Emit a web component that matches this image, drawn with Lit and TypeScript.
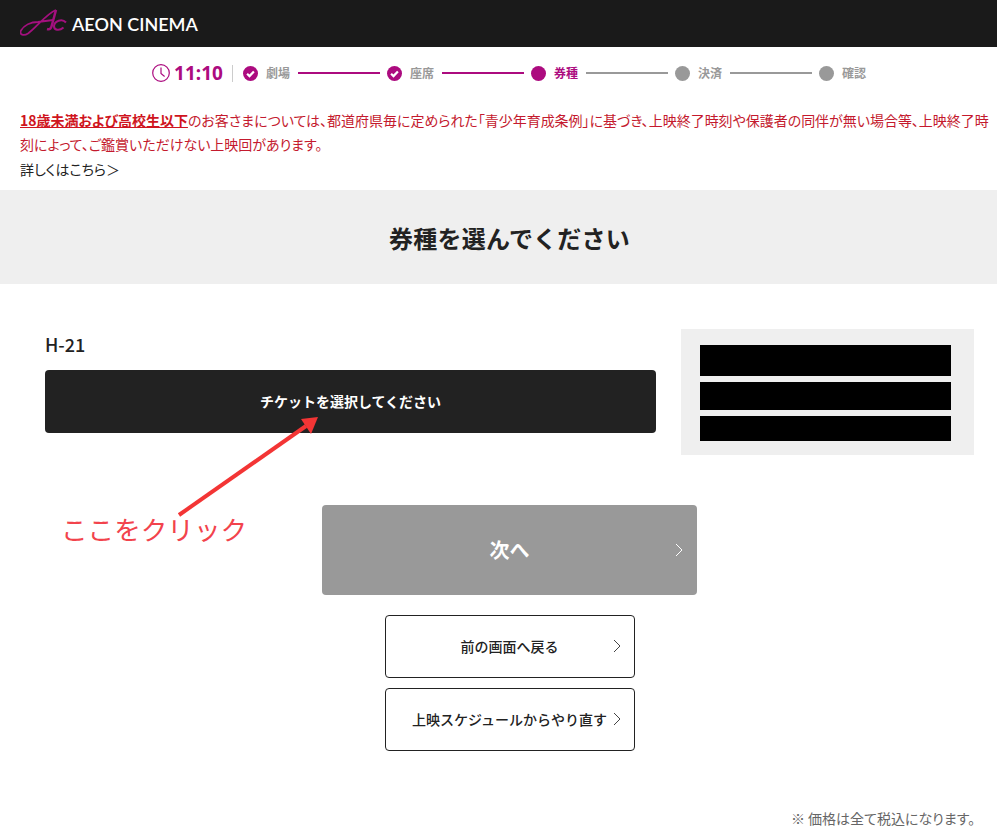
import { LitElement, html, css, svg } from "lit";
import { customElement } from "lit/decorators.js";

const check = svg`<svg class="ic" viewBox="0 0 15 15" width="15" height="15"><circle cx="7.5" cy="7.5" r="7.5" fill="#ac0b7f"/><path d="M4.1 7.7l2.4 2.4 4.4-4.7" fill="none" stroke="#fff" stroke-width="2.2"/></svg>`;
const chev = svg`<svg class="chev" viewBox="0 0 8 14" width="8" height="14"><path d="M1 1l6 6-6 6" fill="none" stroke="currentColor" stroke-width="1"/></svg>`;

type Step = { label: string; state: "done" | "current" | "todo" };
const steps: Step[] = [
  { label: "劇場", state: "done" },
  { label: "座席", state: "done" },
  { label: "券種", state: "current" },
  { label: "決済", state: "todo" },
  { label: "確認", state: "todo" },
];

@customElement("app-root")
export class AppRoot extends LitElement {
  static styles = css`
    :host {
      display: block;
      position: relative;
      width: 997px;
      height: 837px;
      overflow: hidden;
      background: #fff;
      font-family: "Noto Sans CJK JP", "Noto Sans", sans-serif;
      color: #222;
    }
    .page { width: 1019px; }
    .head {
      height: 47px;
      background: #1a1a1a;
      display: flex;
      align-items: center;
      padding-left: 20px;
    }
    .logo { width: 52px; height: 47px; flex: none; display: block; }
    .brand {
      font: 600 18px/46px "Lato", sans-serif;
      color: #fff;
    }
    .stepper {
      height: 52px;
      display: flex;
      align-items: center;
      justify-content: center;
      padding-left: 7px;
    }
    .clock { display: flex; align-items: center; gap: 4px; color: #ac0b7f; }
    .time { font: 700 19px/26px "Noto Sans", sans-serif; }
    .div { width: 1px; height: 17px; background: #ccc; margin: 0 10px 0 9px; }
    .step { display: flex; align-items: center; }
    .dot { width: 15px; height: 15px; border-radius: 50%; background: #999; }
    .dot.current { background: #ac0b7f; }
    .ic { display: block; }
    .lab {
      font-size: 12px;
      font-weight: 700;
      color: #999;
      margin: 0 8px;
      line-height: 16px;
      width: 24px;
    }
    .lab.current { color: #ac0b7f; }
    .line { width: 82px; height: 2px; background: #999; margin-right: 7px; }
    .line.done { background: #ac0b7f; }
    .notice {
      height: 91px;
      box-sizing: border-box;
      padding: 9px 0 0 20px;
      width: 997px;
      font-size: 14px;
      line-height: 24px;
      letter-spacing: -0.02px;
      color: #c41a2e;
      font-feature-settings: "palt";
    }
    .notice b { color: #cf1420; text-decoration: underline; font-weight: 700; }
    .notice .more { color: #222; display: block; margin-top: 1px; }
    .band {
      height: 94px;
      background: #efefef;
      display: flex;
      align-items: center;
      justify-content: center;
      font-size: 24px;
      letter-spacing: 0.2px;
      font-weight: 700;
      color: #222;
    }
    .row {
      display: flex;
      padding: 45px 0 0 45px;
      gap: 25px;
      height: 126px;
    }
    .left { width: 611px; }
    .seat { font-size: 18px; font-weight: 500; line-height: 24px; margin: 0 0 14px; padding-top: 3px; }
    .select {
      height: 63px;
      box-sizing: border-box;
      padding-bottom: 2px;
      background: #222;
      border-radius: 4px;
      color: #fff;
      display: flex;
      align-items: center;
      justify-content: center;
      font-size: 14px;
      font-weight: 700;
    }
    .panel {
      width: 293px;
      height: 126px;
      box-sizing: border-box;
      background: #efefef;
      padding: 16px 23px 0 19px;
      display: flex;
      flex-direction: column;
      gap: 6px;
    }
    .bar { background: #000; height: 28px; }
    .bar.a { height: 31px; }
    .bar.c { height: 25px; }
    .actions {
      display: flex;
      flex-direction: column;
      align-items: center;
      margin-top: 50px;
    }
    .next {
      position: relative;
      width: 375px;
      height: 90px;
      box-sizing: border-box;
      padding-bottom: 2px;
      background: #999;
      border-radius: 4px;
      color: #fff;
      display: flex;
      align-items: center;
      justify-content: center;
      font-size: 20px;
      font-weight: 700;
    }
    .next .chev { position: absolute; right: 14px; top: 38px; }
    .sub {
      position: relative;
      width: 250px;
      height: 63px;
      box-sizing: border-box;
      border: 1px solid #222;
      padding-bottom: 2px;
      border-radius: 4px;
      display: flex;
      align-items: center;
      justify-content: center;
      font-size: 14px;
      font-weight: 500;
      margin-top: 10px;
      background: #fff;
    }
    .sub.first { margin-top: 20px; }
    .sub .chev { position: absolute; right: 13px; top: 23px; color: #444; }
    .note {
      width: 975px;
      text-align: right;
      margin-top: 57px;
      font-size: 14px;
      line-height: 20px;
      color: #666;
      font-feature-settings: "palt";
    }
    .arrow { position: absolute; left: 170px; top: 410px; }
    .callout {
      position: absolute;
      left: 61px;
      top: 510px;
      font-size: 26.6px;
      line-height: 38px;
      font-weight: 400;
      color: #f2434c;
    }
  `;

  render() {
    return html`
      <div class="page">
        <div class="head">
          <svg class="logo" viewBox="20 0 52 47" fill="none" stroke="#a3107e">
            <path d="M56 10C46 14 36 28 28 33.500C24 36 19 35 21 30.500C24 25 31 22 38 22L53 20" stroke-width="1.800"/>
            <path d="M56 10L51.500 26.500Q50.500 30 47 29" stroke-width="2.500"/>
            <path d="M66 22.500C62 18 54.500 21 54 26C53.800 30 59 31.500 63.500 27.500" stroke-width="2"/>
          </svg>
          <span class="brand">AEON CINEMA</span>
        </div>
        <div class="stepper">
          <div class="clock">
            <svg width="18" height="18" viewBox="0 0 18 18"><circle cx="9" cy="9" r="8.3" fill="none" stroke="currentColor" stroke-width="1.2"/><path d="M9 3.5V9.5l3.6 3" fill="none" stroke="currentColor" stroke-width="1.2"/></svg>
            <span class="time">11:10</span>
          </div>
          <div class="div"></div>
          ${steps.map(
            (s, i) => html`
              <div class="step">
                ${s.state === "done" ? check : html`<div class="dot ${s.state}"></div>`}
                <span class="lab ${s.state}">${s.label}</span>
                ${i < steps.length - 1
                  ? html`<div class="line ${s.state === "done" ? "done" : ""}"></div>`
                  : ""}
              </div>
            `
          )}
        </div>
        <div class="notice">
          <b>18歳未満および高校生以下</b>のお客さまについては、都道府県毎に定められた「青少年育成条例」に基づき、上映終了時刻や保護者の同伴が無い場合等、上映終了時刻によって、ご鑑賞いただけない上映回があります。
          <span class="more">詳しくはこちら＞</span>
        </div>
        <div class="band">券種を選んでください</div>
        <div class="row">
          <div class="left">
            <div class="seat">H-21</div>
            <div class="select">チケットを選択してください</div>
          </div>
          <div class="panel">
            <div class="bar a"></div>
            <div class="bar"></div>
            <div class="bar c"></div>
          </div>
        </div>
        <div class="actions">
          <div class="next">次へ${chev}</div>
          <div class="sub first">前の画面へ戻る${chev}</div>
          <div class="sub long">上映スケジュールからやり直す${chev}</div>
        </div>
        <div class="note">※ 価格は全て税込になります。</div>
      </div>
      <svg class="arrow" width="160" height="115" viewBox="170 410 160 115">
        <path d="M179 515L306 426" stroke="#f33535" stroke-width="4" fill="none"/>
        <path d="M318 417L301 419L311 434Z" fill="#f33535"/>
      </svg>
      <div class="callout">ここをクリック</div>
    `;
  }
}
